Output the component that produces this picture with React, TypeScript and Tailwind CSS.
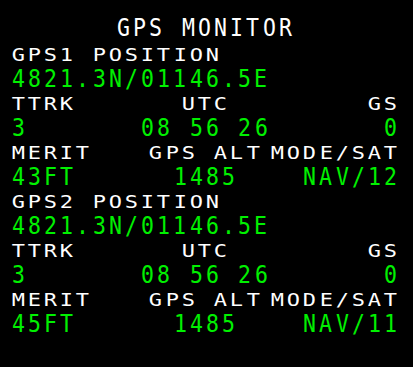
import React from 'react';

type Line = {
  size: 'small' | 'large';
  color: 'white' | 'green';
  left?: string;
  center?: string;
  right?: string;
  className?: string;
};

const lines: Line[] = [
  { size: 'large', color: 'white', center: 'GPS MONITOR', className: 'h-[30px] mb-px' },
  { size: 'small', color: 'white', left: 'GPS1 POSITION', className: 'h-[22px]' },
  { size: 'large', color: 'green', left: '4821.3N/01146.5E', className: 'h-[25px] mb-[2px]' },
  { size: 'small', color: 'white', left: 'TTRK', center: 'UTC', right: 'GS', className: 'h-[22px]' },
  { size: 'large', color: 'green', left: '3', center: '08 56 26', right: '0', className: 'h-[25px] mb-[2px]' },
  { size: 'small', color: 'white', left: 'MERIT', center: 'GPS ALT', right: 'MODE/SAT', className: 'h-[22px]' },
  { size: 'large', color: 'green', left: '43FT', center: '1485', right: 'NAV/12', className: 'h-[25px] mb-[2px]' },
  { size: 'small', color: 'white', left: 'GPS2 POSITION', className: 'h-[22px]' },
  { size: 'large', color: 'green', left: '4821.3N/01146.5E', className: 'h-[25px] mb-[2px]' },
  { size: 'small', color: 'white', left: 'TTRK', center: 'UTC', right: 'GS', className: 'h-[22px]' },
  { size: 'large', color: 'green', left: '3', center: '08 56 26', right: '0', className: 'h-[25px] mb-[2px]' },
  { size: 'small', color: 'white', left: 'MERIT', center: 'GPS ALT', right: 'MODE/SAT', className: 'h-[22px]' },
  { size: 'large', color: 'green', left: '45FT', center: '1485', right: 'NAV/11', className: 'h-[25px] mb-[2px]' },
];

// one character per fixed 16.2px cell, glyph centred like the MCDU grid
const Cells: React.FC<{ text?: string; size: 'small' | 'large' }> = ({ text, size }) => {
  if (!text) return <span />;
  return (
    <span className="flex h-full">
      {text.split('').map((ch, i) => (
        <span key={i} className="w-[16.2px] h-full flex items-center justify-center">
          <span
            className={`inline-block ${
              size === 'small'
                ? 'text-[18px] leading-[18px] scale-x-[1.22]'
                : 'text-[25px] leading-[24px] scale-x-[0.86]'
            }`}
          >
            {ch === ' ' ? '\u00a0' : ch}
          </span>
        </span>
      ))}
    </span>
  );
};

const App: React.FC = () => {
  return (
    <div className="w-[413px] h-[367px] bg-black overflow-hidden pt-[13px] pl-[10px] font-['DejaVu_Sans_Mono',monospace]">
      <div className="w-[388.8px] flex flex-col">
        {lines.map((line, idx) => (
          <div
            key={idx}
            className={`grid grid-cols-[1fr_auto_1fr] grid-rows-[100%] ${line.className} ${
              line.color === 'white' ? 'text-white' : 'text-[#00f000]'
            }`}
          >
            <div className="flex justify-start h-full">
              <Cells text={line.left} size={line.size} />
            </div>
            <div className="flex justify-center h-full">
              <Cells text={line.center} size={line.size} />
            </div>
            <div className="flex justify-end h-full">
              <Cells text={line.right} size={line.size} />
            </div>
          </div>
        ))}
      </div>
    </div>
  );
};

export default App;
